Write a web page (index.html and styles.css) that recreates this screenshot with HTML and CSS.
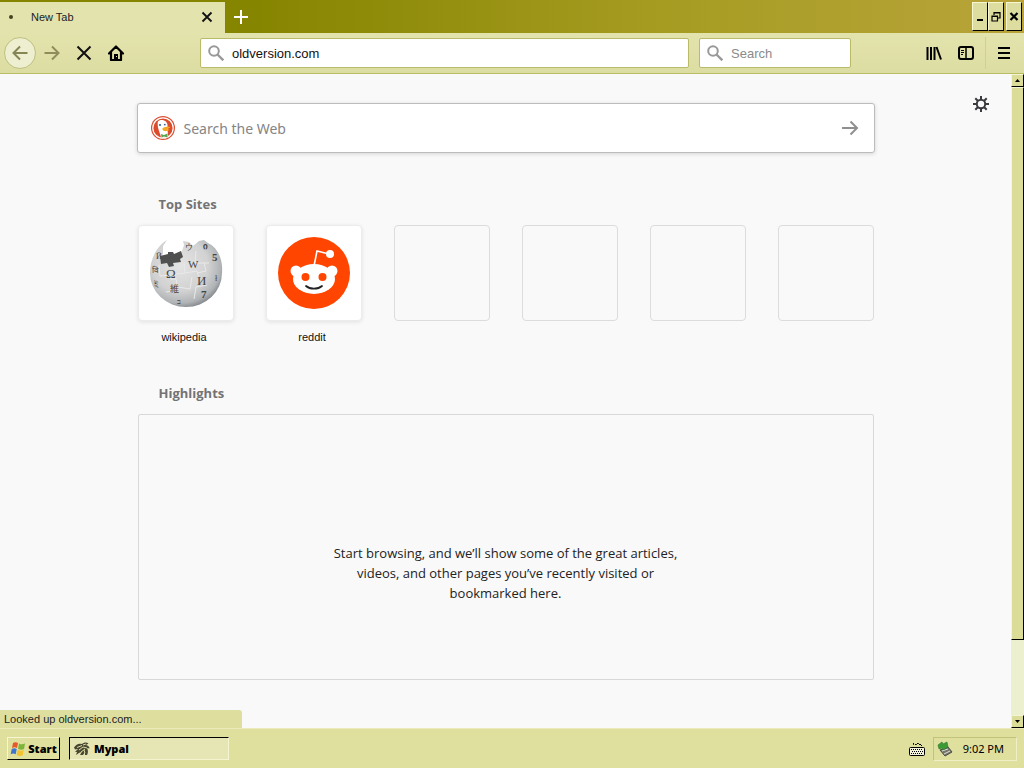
FILE: index.html
```html
<!DOCTYPE html>
<html lang="en">
<head>
    <meta charset="UTF-8">
    <meta name="viewport" content="width=device-width, initial-scale=1.0">
    <title>New Tab</title>
    <link rel="stylesheet" href="styles.css">
</head>
<body>

<!-- Tabs -->
<header class="titlebar">
    <div class="tab">
        <span class="tab-dot"></span>
        <span class="tab-title">New Tab</span>
        <button class="tab-close" aria-label="Close tab">
            <svg width="12" height="12" viewBox="0 0 12 12"><path d="M1.500 1.500l9 9M10.500 1.500l-9 9" stroke="#111" stroke-width="1.800" fill="none"/></svg>
        </button>
    </div>
    <button class="new-tab" aria-label="New tab">
        <svg width="16" height="16" viewBox="0 0 16 16"><path d="M8 1v14M1 8h14" stroke="#fff" stroke-width="2" fill="none"/></svg>
    </button>
    <div class="window-buttons">
        <button aria-label="Minimize"><svg width="12" height="14" viewBox="0 0 12 14"><path d="M3 9h6v2H3z"/></svg></button>
        <button aria-label="Restore"><svg width="12" height="14" viewBox="0 0 12 14"><path d="M4 5V2.500h6V8H8M2 6h5.500v5H2zM3.500 3h7M1.500 6.500h6.500" fill="none" stroke="#000" stroke-width="1.200"/></svg></button>
        <button class="close" aria-label="Close"><svg width="12" height="14" viewBox="0 0 12 14"><path d="M2.500 3l7 7M9.500 3l-7 7" fill="none" stroke="#000" stroke-width="2.200"/></svg></button>
    </div>
</header>

<!-- Navigation -->
<nav class="toolbar">
    <button class="tool back" aria-label="Back">
        <svg width="16" height="16" viewBox="0 0 16 16"><path d="M15.500 8H1.500M8 1.500L1.500 8L8 14.500" fill="none" stroke="#858654" stroke-width="2"/></svg>
    </button>
    <button class="tool" aria-label="Forward">
        <svg width="16" height="16" viewBox="0 0 16 16"><path d="M.5 8h14M8 1.500L14.500 8L8 14.500" fill="none" stroke="#8d8e5b" stroke-width="2"/></svg>
    </button>
    <button class="tool" aria-label="Stop">
        <svg width="16" height="16" viewBox="0 0 16 16"><path d="M1.500 1.500l13 13M14.500 1.500l-13 13" fill="none" stroke="#111" stroke-width="2"/></svg>
    </button>
    <button class="tool" aria-label="Home">
        <svg width="16" height="16" viewBox="0 0 16 16"><path d="M1 8.500L8 1.500L15 8.500M3 7v8h10V7" fill="none" stroke="#000" stroke-width="2.200" stroke-linejoin="round" stroke-linecap="round"/><path d="M6 9h4v6H6z"/><path d="M8 11h1v1H8z" fill="#e0e0a5"/></svg>
    </button>
    <div class="field url">
        <svg width="16" height="16" viewBox="0 0 16 16"><circle cx="6" cy="6" r="4.800" fill="none" stroke="#999" stroke-width="2"/><path d="M9.500 9.500l5.800 5.800" stroke="#999" stroke-width="2.400"/></svg>
        <input type="text" value="oldversion.com" aria-label="Address">
    </div>
    <div class="field search">
        <svg width="16" height="16" viewBox="0 0 16 16"><circle cx="6" cy="6" r="4.800" fill="none" stroke="#999" stroke-width="2"/><path d="M9.500 9.500l5.800 5.800" stroke="#999" stroke-width="2.400"/></svg>
        <input type="text" placeholder="Search" aria-label="Search">
    </div>
    <button class="tool library" aria-label="Library">
        <svg width="16" height="16" viewBox="0 0 16 16"><path d="M1.500 2v13M5 2v13M8.500 2v13M10.500 2l4.500 12.500" fill="none" stroke="#000" stroke-width="2"/></svg>
    </button>
    <button class="tool" aria-label="Sidebars">
        <svg width="16" height="16" viewBox="0 0 16 16"><rect x="1" y="2" width="14" height="12" rx="2" fill="none" stroke="#000" stroke-width="2"/><path d="M8 2v12" stroke="#000" stroke-width="1.500"/><path d="M3 5.500h3M3 7.500h3M3 9.500h2" stroke="#000"/></svg>
    </button>
    <button class="tool menu" aria-label="Menu">
        <svg width="16" height="16" viewBox="0 0 16 16"><path d="M2 3h12M2 8h12M2 13h12" stroke="#000" stroke-width="2"/></svg>
    </button>
</nav>

<div class="viewport">
    <main class="page">
        <button class="settings" aria-label="Customize">
            <svg width="16" height="16" viewBox="0 0 16 16"><circle cx="8" cy="8" r="4.200" fill="none" stroke="#3b3b3f" stroke-width="2"/><path d="M8 0v4M8 12v4M0 8h4M12 8h4M2.300 2.300l2.700 2.700M11 11l2.700 2.700M2.300 13.700L5 11M11 5l2.700-2.700" stroke="#3b3b3f" stroke-width="2"/></svg>
        </button>

        <div class="content">
            <form class="web-search">
                <svg width="24" height="24" viewBox="0 0 24 24">
                    <circle cx="12" cy="12" r="12" fill="#d95034"/>
                    <circle cx="12" cy="12" r="10.200" fill="#dc4c2c" stroke="#fff" stroke-width="1.200"/>
                    <path d="M6.800 6C7.500 4 11 3.500 13 4.500c3 1 4 4 3.500 7.500l.5 8.500c-2.500 1.500-5 1.500-7 .7C9 17 6 11 6.800 6z" fill="#fff"/>
                    <circle cx="9" cy="9" r="1.100" fill="#3a5f9c"/>
                    <circle cx="13.800" cy="8.600" r=".9" fill="#3a5f9c"/>
                    <path d="M11.500 12.200c2-1.400 6-1.800 8-1.200-1 1.300-2.500 1.700-4 2.100 1 .5 2.500.5 3.300.5-1.800 2-6.300 2-7.300.2z" fill="#f5a623"/>
                    <path d="M10 18l3 1 3.500-1.500v4l-3.500-1-2.500 1z" fill="#55a84c"/>
                </svg>
                <input type="text" placeholder="Search the Web" aria-label="Search the Web">
                <button type="button" aria-label="Submit search">
                    <svg width="18" height="16" viewBox="0 0 18 16"><path d="M1 8h15M9.500 1.500L16 8L9.500 14.500" fill="none" stroke="#8f8f8f" stroke-width="2"/></svg>
                </button>
            </form>

            <section class="top-sites">
                <h2>Top Sites</h2>
                <ul class="tiles">
                    <li>
                        <a href="#">
                            <span class="tile filled">
                                <svg width="76" height="72" viewBox="0 0 76 72">
                                    <defs>
                                        <radialGradient id="globe" cx="42%" cy="38%" r="64%">
                                            <stop offset="0" stop-color="#e4e4e4"/>
                                            <stop offset=".6" stop-color="#d2d2d2"/>
                                            <stop offset=".88" stop-color="#b0b3b5"/>
                                            <stop offset="1" stop-color="#85898d"/>
                                        </radialGradient>
                                    </defs>
                                    <path d="M19 3l-4 6 0 8-3 5 11-1 10-4 3-9-1-4 6 1 4 4 6-5 5-1 4 3C70 11 75 22 74 36A36 34 0 0 1 2 36C2 22 9 9 19 3z" fill="url(#globe)"/>
                                    <path d="M12 19l8-2 0-2 5 0 1 2 7-3 2 6-3 2 1 3-8 1 1 3-5 1-2-4-6 1z" fill="#505050"/>
                                    <path d="M11 28l1 11 11-1 0 4 5 0-1-5 10-1-1-10M37 36l12-2 2 7M28 42l2 11-12 2M30 50l12 2 2-12M56 26l2 8-9 2M59 48l-11 2-2 12M48 14l-1 12 14 0" fill="none" stroke="#e9e9e9" stroke-width="1"/>
                                    <g class="globe-text">
                                        <text x="18" y="41" font-size="13">Ω</text>
                                        <text x="40" y="31" font-size="11">W</text>
                                        <text x="49" y="48" font-size="13">И</text>
                                        <text x="22" y="55" font-size="9">維</text>
                                        <text x="53" y="61" font-size="11" font-weight="bold">7</text>
                                        <text x="37" y="13" font-size="8">ウ</text>
                                        <text x="64" y="24" font-size="11" font-weight="bold">5</text>
                                        <text x="4" y="36" font-size="8">वि</text>
                                        <text x="6" y="50" font-size="8">ই</text>
                                        <text x="8" y="22" font-size="8">Й</text>
                                        <text x="55" y="12" font-size="9" font-weight="bold">ი</text>
                                        <text x="29" y="67" font-size="8">ב</text>
                                        <text x="67" y="44" font-size="8">ł</text>
                                    </g>
                                </svg>
                            </span>
                            <span class="label">wikipedia</span>
                        </a>
                    </li>
                    <li>
                        <a href="#">
                            <span class="tile filled">
                                <svg width="72" height="72" viewBox="0 0 72 72">
                                    <circle cx="36" cy="36" r="36" fill="#ff4500"/>
                                    <path d="M36 29l3-15 12 3" fill="none" stroke="#fff" stroke-width="1.600"/>
                                    <circle cx="52" cy="17" r="4" fill="#fff"/>
                                    <circle cx="18" cy="34" r="5.500" fill="#fff"/>
                                    <circle cx="54" cy="34" r="5.500" fill="#fff"/>
                                    <ellipse cx="36" cy="42" rx="21" ry="15" fill="#fff"/>
                                    <circle cx="27.500" cy="40" r="4" fill="#ff4500"/>
                                    <circle cx="44.500" cy="40" r="4" fill="#ff4500"/>
                                    <path d="M28 49c4 3.500 12 3.500 16 0" fill="none" stroke="#222" stroke-width="1.800" stroke-linecap="round"/>
                                </svg>
                            </span>
                            <span class="label">reddit</span>
                        </a>
                    </li>
                    <li><span class="tile"></span></li>
                    <li><span class="tile"></span></li>
                    <li><span class="tile"></span></li>
                    <li><span class="tile"></span></li>
                </ul>
            </section>

            <section class="highlights">
                <h2>Highlights</h2>
                <div class="empty">
                    <p>Start browsing, and we’ll show some of the great articles, videos, and other pages you’ve recently visited or bookmarked here.</p>
                </div>
            </section>
        </div>
    </main>

    <!-- Scrollbar -->
    <div class="scrollbar">
        <button aria-label="Scroll up"><svg width="5" height="3" viewBox="0 0 5 3"><path d="M0 3L2.500 0L5 3z"/></svg></button>
        <div class="track"><div class="thumb"></div></div>
        <button aria-label="Scroll down"><svg width="5" height="3" viewBox="0 0 5 3"><path d="M0 0h5L2.500 3z"/></svg></button>
    </div>

    <div class="status">Looked up oldversion.com...</div>
</div>

<!-- Taskbar -->
<footer class="taskbar">
    <button class="start">
        <svg width="17" height="16" viewBox="0 0 17 16">
            <path d="M3 2c2-1.300 3.500-1 5 0L7 7C5.500 6 4 6 2 7z" fill="#e5582b"/>
            <path d="M9 2.500c2 1.200 4 1 6 0L14 8c-2 1-4 1-6-.3z" fill="#7db53c"/>
            <path d="M1.700 8c2-1.200 3.500-1 5 0l-1 5.300c-1.700-1-3.300-1-5 0z" fill="#3f74cf"/>
            <path d="M7.700 8.700c2 1.200 4 1.200 6 .3l-1 5.300c-2 1-4 .8-6-.3z" fill="#f3c22f"/>
        </svg>
        Start
    </button>
    <button class="task">
        <svg width="16" height="16" viewBox="0 0 16 16">
            <path d="M0 6.500C2 3 5 2 8 3c2-2 5-2 6.500-.5L12 4c2 .5 3.500 1.500 3.500 3.500L13 7c1 2 1.500 4.500 0 7h-2l0-3-2 3H6l2-3.500L5 12l-3 2 1-3-2 0 3-3-3 .5z" fill="#4a4930"/>
            <path d="M3 6.500l5-2M5 9l4-3 4 1M7 11l4-3M9 4l3-1M10 9l1 3" stroke="#d9d9aa" fill="none"/>
        </svg>
        Mypal
    </button>
    <svg class="keyboard" width="16" height="14" viewBox="0 0 16 14">
        <path d="M4.500 1v1.500h3V1.500h2v1h3V4" fill="none" stroke="#000" stroke-dasharray="2 1"/>
        <rect x=".5" y="5.500" width="15" height="8" rx="1" fill="#f4f4dc" stroke="#000"/>
        <path d="M2 7.500h12M3 9.500h11M2 11.500h12" stroke="#000" stroke-dasharray="1 1"/>
    </svg>
    <div class="tray">
        <svg width="16" height="16" viewBox="0 0 16 16">
            <path d="M3 9l8-3 4 5-7 4z" fill="#76776c" stroke="#4c4e42"/>
            <path d="M5 10l6-2M7 13l6-3" stroke="#e0e0d5"/>
            <path d="M1 4l4-3 1 2 4-2 1 5-5 3-1-2-3 1z" fill="#3d9b36" stroke="#28752a" stroke-width=".6"/>
        </svg>
        <span>9:02 PM</span>
    </div>
</footer>

</body>
</html>
```
FILE: styles.css
```css
/* Basic Reset */
* {
    margin: 0;
    padding: 0;
    box-sizing: border-box;
}

body {
    font-family: "Liberation Sans", Arial, sans-serif;
    font-size: 11px;
    color: #222;
    background-color: #f9f9fa;
    display: flex;
    flex-direction: column;
    height: 100vh;
    overflow: hidden;
}

button {
    border: none;
    background: none;
    display: flex;
    align-items: center;
    justify-content: center;
    flex-shrink: 0;
}

svg {
    flex-shrink: 0;
}

input {
    border: none;
    outline: none;
    background: none;
    flex: 1;
    min-width: 0;
}

/* Tabs */
.titlebar {
    display: flex;
    height: 33px;
    flex-shrink: 0;
    background: linear-gradient(to right, #868500 25%, #a69c22 65%, #b8a43a);
}

.tab {
    width: 225px;
    display: flex;
    align-items: center;
    padding: 0 12px 2px 9px;
    background-color: #e3e3ae;
    border-top: 2px solid #858500;
}

.tab-dot {
    width: 4px;
    height: 4px;
    border-radius: 50%;
    background-color: #444422;
    margin-right: 18px;
}

.tab-title {
    flex: 1;
}

.new-tab {
    width: 32px;
}

.window-buttons {
    display: flex;
    margin: 2px 2px 2px auto;
}

.window-buttons button {
    width: 16px;
    background-color: #dedda0;
    border: 1px solid #f6f6d0;
    border-right-color: #000;
    border-bottom-color: #000;
}

.window-buttons .close {
    margin-left: 2px;
}

/* Toolbar */
.toolbar {
    display: flex;
    align-items: center;
    height: 41px;
    flex-shrink: 0;
    padding: 0 2px 0 4px;
    background: linear-gradient(to bottom, #e3e3ad, #dcdda2);
    border-bottom: 1px solid #b9bc62;
}

.tool {
    width: 32px;
    height: 32px;
}

.back {
    border: 1px solid #bfc080;
    border-radius: 50%;
    background-color: #eeeed0;
}

.field {
    display: flex;
    align-items: center;
    gap: 8px;
    height: 30px;
    padding: 0 7px;
    background-color: #fff;
    border: 1px solid #b9bb68;
    border-radius: 2px;
}

.field input {
    font-family: "Liberation Sans", Arial, sans-serif;
    font-size: 13px;
    color: #111;
}

.field input::placeholder {
    color: #8a8a8a;
}

.url {
    flex: 1;
    margin: 0 10px 0 68px;
}

.search {
    width: 152px;
}

.library {
    margin-left: 67px;
}

.menu {
    width: 37px;
    margin-left: 3px;
    border-left: 1px solid #cfd092;
}

/* New tab page */
.viewport {
    position: relative;
    display: flex;
    flex: 1;
    min-height: 0;
}

.page {
    position: relative;
    flex: 1;
    padding: 29px 32px;
    background-color: #f9f9fa;
    overflow: hidden;
}

.settings {
    position: absolute;
    top: 22px;
    right: 22px;
}

.content {
    max-width: 736px;
    margin: 0 auto;
}

.web-search {
    display: flex;
    align-items: center;
    height: 50px;
    margin: 0 -1px;
    padding: 0 15px 0 13px;
    background-color: #fff;
    border: 1px solid #bcbcbc;
    border-radius: 3px;
    box-shadow: 0 1px 4px rgba(0, 0, 0, 0.15);
}

.web-search input {
    font-family: "Noto Sans", sans-serif;
    font-size: 14px;
    margin-left: 9px;
}

.web-search input::placeholder {
    color: #858585;
}

h2 {
    font-family: "Open Sans", sans-serif;
    font-size: 13px;
    line-height: 20px;
    color: #737373;
    padding-left: 21px;
}

.top-sites {
    margin-top: 41px;
}

.tiles {
    display: grid;
    grid-template-columns: repeat(auto-fill, 96px);
    gap: 32px;
    margin-top: 11px;
    list-style: none;
}

.tiles a {
    color: #111;
    text-decoration: none;
}

.tile {
    display: flex;
    align-items: center;
    justify-content: center;
    height: 96px;
    border: 1px solid #dcdcdd;
    border-radius: 4px;
}

.filled {
    background-color: #fff;
    border-color: #ececed;
    box-shadow: 0 1px 4px rgba(0, 0, 0, 0.1);
}

.globe-text {
    font-family: "Liberation Serif", "Noto Sans CJK JP", serif;
    fill: #444;
}

.label {
    display: block;
    padding-right: 3px;
    line-height: 32px;
    text-align: center;
}

.highlights {
    margin-top: 30px;
}

.empty {
    display: flex;
    align-items: center;
    justify-content: center;
    height: 266px;
    margin-top: 11px;
    padding-top: 52px;
    border: 1px solid #d8d8d9;
    border-radius: 2px;
}

.empty p {
    max-width: 350px;
    font-family: "Open Sans", sans-serif;
    font-size: 13px;
    line-height: 20px;
    text-align: center;
}

/* Scrollbar */
.scrollbar {
    display: flex;
    flex-direction: column;
    width: 13px;
    background-color: #edf0cf;
}

.scrollbar button,
.thumb {
    background-color: #dadc98;
    border: 1px solid #f4f5d4;
    border-right-color: #000;
    border-bottom-color: #000;
}

.scrollbar button {
    height: 13px;
}

.track {
    flex: 1;
}

.thumb {
    height: 88%;
}

.status {
    position: absolute;
    left: 0;
    bottom: 0;
    width: 242px;
    padding-left: 4px;
    line-height: 18px;
    background-color: #dedf9f;
    border-top-right-radius: 3px;
}

/* Taskbar */
.taskbar {
    display: flex;
    align-items: center;
    height: 40px;
    flex-shrink: 0;
    padding: 0 7px;
    background-color: #dfdf9e;
    border-top: 1px solid #eaeabc;
}

.taskbar button {
    font-family: "Open Sans", sans-serif;
    font-size: 11px;
    font-weight: 800;
    color: #000;
    height: 23px;
}

.start {
    width: 53px;
    gap: 1px;
    border: 1px solid #f6f6d0;
    border-right-color: #000;
    border-bottom-color: #000;
}

.taskbar .task {
    width: 160px;
    margin-left: 9px;
    padding-left: 4px;
    gap: 4px;
    justify-content: flex-start;
    background-color: #e6e6b5;
    border: 1px solid #f4f4d0;
    border-top-color: #000;
    border-left-color: #000;
}

.keyboard {
    margin-left: auto;
    margin-right: 8px;
}

.tray {
    display: flex;
    align-items: center;
    gap: 10px;
    height: 24px;
    padding: 0 12px 0 3px;
    border: 1px solid #c2c278;
    border-right-color: #f0f0c8;
    border-bottom-color: #f0f0c8;
    font-family: "Noto Sans", sans-serif;
    color: #000;
}
```
